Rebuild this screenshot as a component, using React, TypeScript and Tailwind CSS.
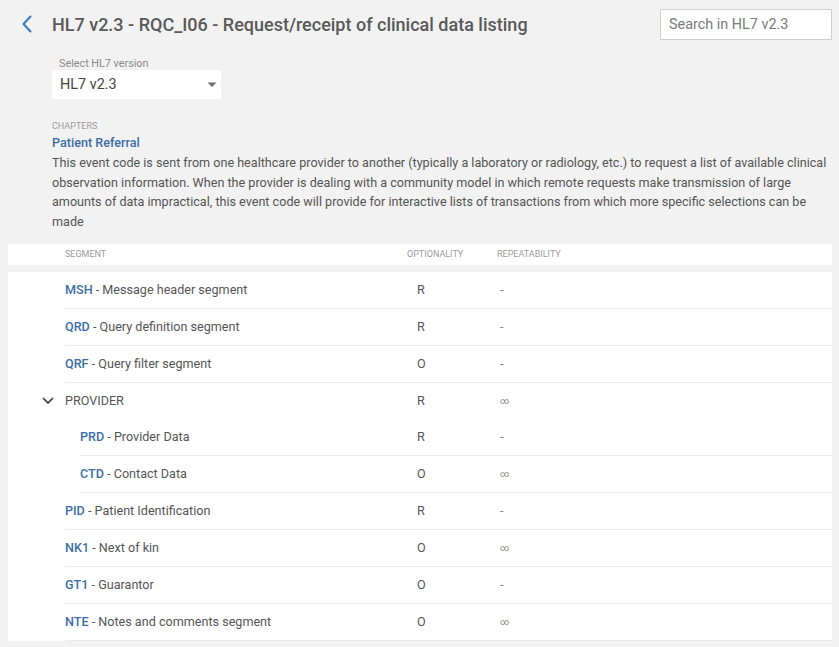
import React from "react";

type Row = {
  code?: string;
  desc?: string;
  group?: string;
  opt: string;
  rep: string;
  nested?: boolean;
};

const rows: Row[] = [
  { code: "MSH", desc: "Message header segment", opt: "R", rep: "-" },
  { code: "QRD", desc: "Query definition segment", opt: "R", rep: "-" },
  { code: "QRF", desc: "Query filter segment", opt: "O", rep: "-" },
  { group: "PROVIDER", opt: "R", rep: "∞" },
  { code: "PRD", desc: "Provider Data", opt: "R", rep: "-", nested: true },
  { code: "CTD", desc: "Contact Data", opt: "O", rep: "∞", nested: true },
  { code: "PID", desc: "Patient Identification", opt: "R", rep: "-" },
  { code: "NK1", desc: "Next of kin", opt: "O", rep: "∞" },
  { code: "GT1", desc: "Guarantor", opt: "O", rep: "-" },
  { code: "NTE", desc: "Notes and comments segment", opt: "O", rep: "∞" },
];

function Cells({ r, segWidth }: { r: Row; segWidth: string }) {
  return (
    <>
      <div className={`${segWidth} shrink-0 truncate`}>
        {r.group ? (
          <span className="text-[#555]">{r.group}</span>
        ) : (
          <>
            <span className="font-medium text-[#3b6ea8]">{r.code}</span>
            <span className="text-[#555]"> - {r.desc}</span>
          </>
        )}
      </div>
      <div className="w-[90px] shrink-0 pl-[10px] text-[#555]">{r.opt}</div>
      <div className="flex items-center pl-[3px] text-[#888]">
        {r.rep === "∞" ? (
          <span className="text-[9px] leading-none">∞</span>
        ) : (
          r.rep
        )}
      </div>
    </>
  );
}

export default function App() {
  return (
    <div
      className="min-h-[647px] w-full bg-[#f2f2f2] pb-[6px]"
      style={{ fontFamily: "Roboto, 'Noto Sans', Arial, sans-serif" }}
    >
      {/* Header */}
      <div className="flex h-[48px] items-center justify-between">
        <div className="flex items-center">
          <div className="flex w-[52px] justify-center pl-[2px]">
            <svg width="14" height="18" viewBox="0 0 14 18" fill="none">
              <path
                d="M10.5 1.5 L3.5 9 L10.5 16.5"
                stroke="#3b78c0"
                strokeWidth="2"
                strokeLinecap="round"
                strokeLinejoin="round"
              />
            </svg>
          </div>
          <h1 className="text-[18px] font-medium text-[#595959]">
            HL7 v2.3 - RQC_I06 - Request/receipt of clinical data listing
          </h1>
        </div>
        <div className="mr-[7px] flex h-[31px] w-[172px] items-center border border-[#cfcfcf] bg-white pl-[8px] pt-[1px] text-[14.4px] text-[#7a7a7a]">
          Search in HL7 v2.3
        </div>
      </div>

      {/* Select */}
      <div className="ml-[52px] mt-[9px]">
        <div className="pl-[7px] text-[10.8px] leading-[13px] text-[#8a8a8a]">
          Select HL7 version
        </div>
        <div className="flex h-[29px] w-[169px] items-center justify-between bg-white pl-[8px] pr-[4px] pt-[1px] text-[14.4px] text-[#444]">
          <span>HL7 v2.3</span>
          <svg width="10" height="6" viewBox="0 0 10 6">
            <path d="M0.5 0.5 L9.5 0.5 L5 5 Z" fill="#6f6f6f" />
          </svg>
        </div>
      </div>

      {/* Chapter */}
      <div className="ml-[52px] mr-[9px] mt-[22px]">
        <div className="text-[9px] leading-[11px] text-[#9a9a9a]">CHAPTERS</div>
        <div className="text-[12.6px] font-medium leading-[21px] text-[#3b6ea8]">
          Patient Referral
        </div>
        <p className="text-[12.6px] leading-[19.5px] text-[#555]">
          This event code is sent from one healthcare provider to another (typically a
          laboratory or radiology, etc.) to request a list of available clinical observation
          information. When the provider is dealing with a community model in which remote
          requests make transmission of large amounts of data impractical, this event code
          will provide for interactive lists of transactions from which more specific
          selections can be made
        </p>
      </div>

      {/* Table header */}
      <div className="ml-[8px] mr-[7px] mt-[13px] flex h-[21px] items-center bg-white pl-[57px] text-[9px] text-[#9a9a9a]">
        <div className="w-[342px] shrink-0">SEGMENT</div>
        <div className="w-[90px] shrink-0">OPTIONALITY</div>
        <div>REPEATABILITY</div>
      </div>

      {/* Table body */}
      <div className="ml-[8px] mr-[7px] mt-[7px] bg-white text-[12.6px]">
        {rows.map((r, i) =>
          r.group ? (
            <div key={i} className="flex h-[36px] items-center pl-[34px]">
              <div className="flex w-[23px] shrink-0 items-center">
                <svg width="12" height="8" viewBox="0 0 12 8" fill="none">
                  <path
                    d="M1.5 1.5 L6 6 L10.5 1.5"
                    stroke="#555"
                    strokeWidth="1.8"
                    strokeLinecap="round"
                    strokeLinejoin="round"
                  />
                </svg>
              </div>
              <Cells r={r} segWidth="w-[342px]" />
            </div>
          ) : (
            <div key={i} className={r.nested ? "pl-[72px]" : "pl-[57px]"}>
              <div className="flex h-[37px] items-center border-b border-[#ececec]">
                <Cells r={r} segWidth={r.nested ? "w-[327px]" : "w-[342px]"} />
              </div>
            </div>
          )
        )}
      </div>
    </div>
  );
}
